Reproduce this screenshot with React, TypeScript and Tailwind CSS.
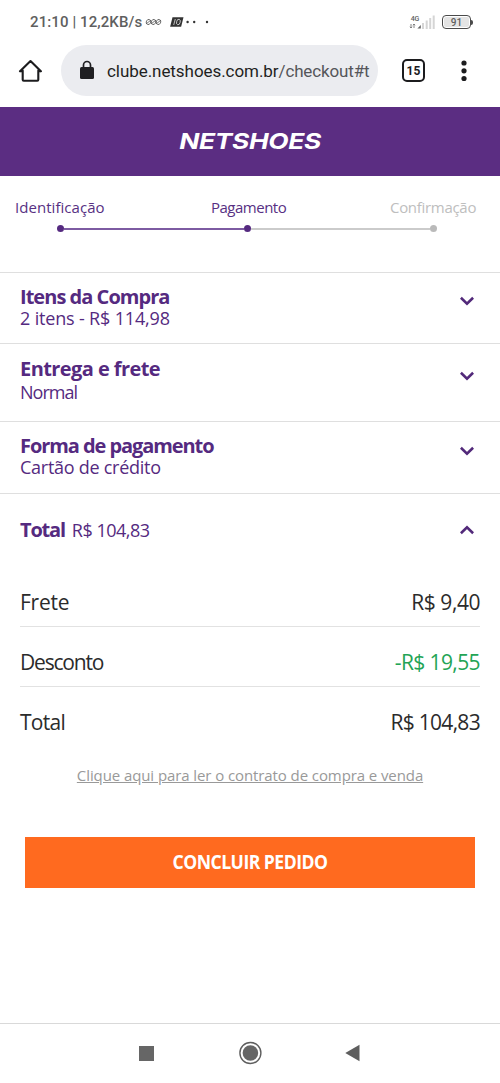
import { useState, type ReactNode } from "react";

const SUMMARY = [
    { label: "Frete", value: "R$ 9,40", labelClass: "tracking-[-0.25px]", valueClass: "text-[#2b2b2b] tracking-[-0.45px]" },
    { label: "Desconto", value: "-R$ 19,55", labelClass: "tracking-[-1.2px]", valueClass: "text-[#23a455] tracking-[-0.6px]" },
    { label: "Total", value: "R$ 104,83", labelClass: "tracking-[-0.7px]", valueClass: "text-[#2b2b2b] tracking-[-0.7px]" },
];

function Chevron({ up = false }: { up?: boolean }) {
    return (
        <svg viewBox="0 0 14 10" className={`h-2.5 w-3.5 ${up ? "rotate-180" : ""}`} fill="none" stroke="#52297a" strokeWidth="2.6">
            <path d="M.9 1.8 7 7.6l6.1-5.8" />
        </svg>
    );
}

function StatusBar() {
    return (
        <div className="flex h-11 items-center justify-between pr-[27px] pl-[30px] text-[#5f5f5f]">
            <div className="flex items-center">
                <span className="text-[15px] font-medium tracking-[0.1px] whitespace-nowrap">21:10 | 12,2KB/s</span>
                <svg viewBox="0 0 66 12" className="ml-[3px] h-3 w-[66px]" fill="none">
                    <g stroke="#555" strokeWidth=".8">
                        <ellipse cx="3.5" cy="6" rx="2.2" ry="2.6" transform="rotate(25 3.5 6)" />
                        <ellipse cx="8.5" cy="6" rx="2.2" ry="2.6" transform="rotate(25 8.5 6)" />
                        <ellipse cx="13.5" cy="6" rx="2.2" ry="2.6" transform="rotate(25 13.5 6)" />
                        <path d="m1 8 5-4M6 8l5-4M11 8l5-4" />
                    </g>
                    <path d="M27.5 1.2h11l-2.4 9.6h-11z" fill="#333" />
                    <path d="m30.3 3-1.6 6" stroke="#ddd" strokeWidth=".8" />
                    <ellipse cx="33.4" cy="6" rx="1.8" ry="2.8" stroke="#ddd" strokeWidth=".8" transform="rotate(15 33.4 6)" />
                    <g fill="#333">
                        <circle cx="42.6" cy="6" r="1.2" />
                        <circle cx="49.2" cy="6" r="1.2" />
                        <circle cx="62" cy="6" r="1.2" />
                    </g>
                </svg>
            </div>
            <div className="flex items-center gap-[7px]">
                <div className="flex items-end">
                    <div className="flex flex-col items-center">
                        <span className="text-[7px] leading-[8px] font-medium">4G</span>
                        <svg viewBox="0 0 12 6" className="h-1.5 w-3" stroke="#777" strokeWidth=".9" fill="none">
                            <path d="M2 1v4M.8 3.8 2 5l1.2-1.2M5 5V1M3.8 2.2 5 1l1.2 1.2" />
                            <path d="M11.8 2v3.5H8.4z" fill="#666" stroke="none" />
                        </svg>
                    </div>
                    <svg viewBox="0 0 14 14" className="h-3.5 w-3.5" fill="#d5d5d5">
                        <path d="M1 8h2v6H1zM4.7 5.5h2V14h-2zM8.2 3h2v11h-2zM11.7 .5h2V14h-2z" />
                    </svg>
                </div>
                <div className="flex items-center">
                    <div className="flex h-[14px] w-[29px] items-center justify-center rounded-[4px] border-[1.5px] border-[#4a4a4a] p-px">
                        <span className="flex h-full w-full items-center justify-center rounded-[2px] bg-[#e4e4e4] pt-px text-[10px] leading-none font-medium">91</span>
                    </div>
                    <span className="h-[5px] w-[2px] rounded-r bg-[#4a4a4a]" />
                </div>
            </div>
        </div>
    );
}

function BrowserBar() {
    return (
        <div className="flex h-[63px] items-start">
            <svg viewBox="0 0 24 24" className="mt-[15px] ml-[18px] h-6 w-6" fill="none" stroke="#1c1c1e" strokeWidth="2.1" strokeLinejoin="round" strokeLinecap="round">
                <path d="M4.7 11.6v9.2a1 1 0 0 0 1 1h13.6a1 1 0 0 0 1-1v-9.2M2 12.3h2.7M22.9 12.3h-2.6M2 12.3 12.5 2l10.4 10.3" />
            </svg>
            <div className="mt-px ml-[19px] flex h-[51px] w-[317px] items-center rounded-full bg-[#ebecf0] pl-[18px]">
                <svg viewBox="0 0 16 20" className="-mt-px h-5 w-4">
                    <path d="M4.5 8V5a3.5 3.5 0 0 1 7 0v3" fill="none" stroke="#1f1f22" strokeWidth="1.7" />
                    <rect x="1" y="7" width="14" height="12" rx="1.5" fill="#1f1f22" />
                </svg>
                <span className="ml-[12px] pt-0.5 text-[17px] tracking-[-0.06px] whitespace-nowrap text-[#1f1f22]">
                    clube.netshoes.com.br<span className="tracking-[-0.15px] text-[#55565a]">/checkout#t</span>
                </span>
            </div>
            <span className="mt-[15px] ml-[24px] flex h-[23px] w-[23px] items-center justify-center rounded-[5px] border-2 border-[#1c1c1e] text-[12px] font-bold text-[#1c1c1e]">
                15
            </span>
            <svg viewBox="0 0 6 22" className="mt-[16px] ml-[36px] h-[22px] w-1.5" fill="#1c1c1e">
                <circle cx="3" cy="3" r="2.6" />
                <circle cx="3" cy="10.8" r="2.6" />
                <circle cx="3" cy="18.5" r="2.6" />
            </svg>
        </div>
    );
}

function Steps() {
    return (
        <div className="h-24 pt-5">
            <div className="flex pl-[15px] text-[15px] leading-[22px] whitespace-nowrap text-[#573083]">
                <span className="w-[195px] tracking-[0.05px]">Identificação</span>
                <span className="w-[180px] pl-px tracking-[-0.5px]">Pagamento</span>
                <span className="tracking-[-0.3px] text-[#bebebe]">Confirmação</span>
            </div>
            <div className="mt-[7px] ml-[57px] flex w-[380px] items-center">
                <span className="h-[7px] w-[7px] rounded-full bg-[#552a80]" />
                <span className="h-0.5 flex-1 bg-[#7d5ba2]" />
                <span className="h-[7px] w-[7px] rounded-full bg-[#552a80]" />
                <span className="h-0.5 flex-1 bg-[#cbcbcb]" />
                <span className="h-[7px] w-[7px] rounded-full bg-[#bababa]" />
            </div>
        </div>
    );
}

function Section({ className, chevronClass, children }: { className: string; chevronClass: string; children: ReactNode }) {
    return (
        <section className={`flex justify-between border-t border-[#dfdfdf] pr-[26px] pl-5 whitespace-nowrap text-[#552a80] ${className}`}>
            <div>{children}</div>
            <div className={chevronClass}>
                <Chevron />
            </div>
        </section>
    );
}

export default function App() {
    const [open, setOpen] = useState(true);

    return (
        <div className="flex h-[1083px] w-[500px] flex-col overflow-hidden bg-white font-['Open_Sans','Noto_Sans',sans-serif]">
            <div className="font-['Roboto',sans-serif]">
                <StatusBar />
                <BrowserBar />
            </div>

            <header className="flex h-[69px] items-center justify-center bg-[#5b2d82]">
                <span className="scale-x-[1.2] font-['Inter',sans-serif] text-[22px] font-bold tracking-[-0.3px] text-white italic">
                    NETSHOES
                </span>
            </header>

            <Steps />

            <Section className="h-[71px] pt-[13px]" chevronClass="pt-[10px]">
                <h2 className="text-[20px] leading-[22px] font-bold tracking-[-0.97px]">Itens da Compra</h2>
                <p className="-mt-px text-[18px] leading-[22px] tracking-[-0.17px]">2 itens - R$ 114,98</p>
            </Section>
            <Section className="h-[78px] pt-[14px]" chevronClass="pt-[13px]">
                <h2 className="text-[20px] leading-[22px] font-bold tracking-[-0.57px]">Entrega e frete</h2>
                <p className="mt-px text-[18px] leading-[22px] tracking-[-1px]">Normal</p>
            </Section>
            <Section className="h-[72px] pt-[13px]" chevronClass="pt-[11px]">
                <h2 className="text-[20px] leading-[22px] font-bold tracking-[-1.07px]">Forma de pagamento</h2>
                <p className="-mt-px text-[18px] leading-[22px] tracking-[-0.27px]">Cartão de crédito</p>
            </Section>

            <section className="border-t border-[#dfdfdf]">
                <button
                    onClick={() => setOpen(!open)}
                    className="flex h-[73px] w-full cursor-pointer items-center justify-between pr-[26px] pb-0.5 pl-5 text-[#552a80]"
                >
                    <span className="flex items-baseline gap-[7px] whitespace-nowrap">
                        <strong className="text-[20px] leading-[22px] font-bold tracking-[-1.2px]">Total</strong>
                        <span className="text-[18px] leading-[22px] tracking-[-0.5px]">R$ 104,83</span>
                    </span>
                    <Chevron up={open} />
                </button>
                {open && (
                    <dl className="px-5 text-[21px] text-[#2b2b2b]">
                        {SUMMARY.map((row) => (
                            <div key={row.label} className="flex h-[60px] items-center justify-between border-b border-[#e2e2e2] pt-3 last:border-transparent">
                                <dt className={row.labelClass}>{row.label}</dt>
                                <dd className={row.valueClass}>{row.value}</dd>
                            </div>
                        ))}
                    </dl>
                )}
            </section>

            <a href="#contrato" className="mt-[17px] self-center text-[15px] leading-[22px] tracking-[-0.09px] whitespace-nowrap text-[#999] underline">
                Clique aqui para ler o contrato de compra e venda
            </a>

            <button className="mx-[25px] mt-[51px] flex h-[51px] cursor-pointer items-center justify-center bg-[#ff6a1f] pb-0.5 text-white">
                <span className="scale-x-[0.88] text-[20px] font-bold tracking-[-0.6px]">CONCLUIR PEDIDO</span>
            </button>

            <nav className="mt-auto flex h-[60px] items-center justify-between border-t border-[#d9d9d9] pr-[140px] pb-px pl-[139px]">
                <span className="h-[15px] w-[15px] bg-[#666]" />
                <svg viewBox="0 0 24 24" className="h-6 w-6">
                    <circle cx="12.4" cy="12" r="10.5" fill="none" stroke="#5e5e5e" strokeWidth="1.4" />
                    <circle cx="12.4" cy="12" r="7.8" fill="#666" />
                </svg>
                <svg viewBox="0 0 15 18" className="h-[18px] w-[15px]" fill="#5e5e5e">
                    <path d="M14.5 .8v16.4L.3 9z" />
                </svg>
            </nav>
        </div>
    );
}
